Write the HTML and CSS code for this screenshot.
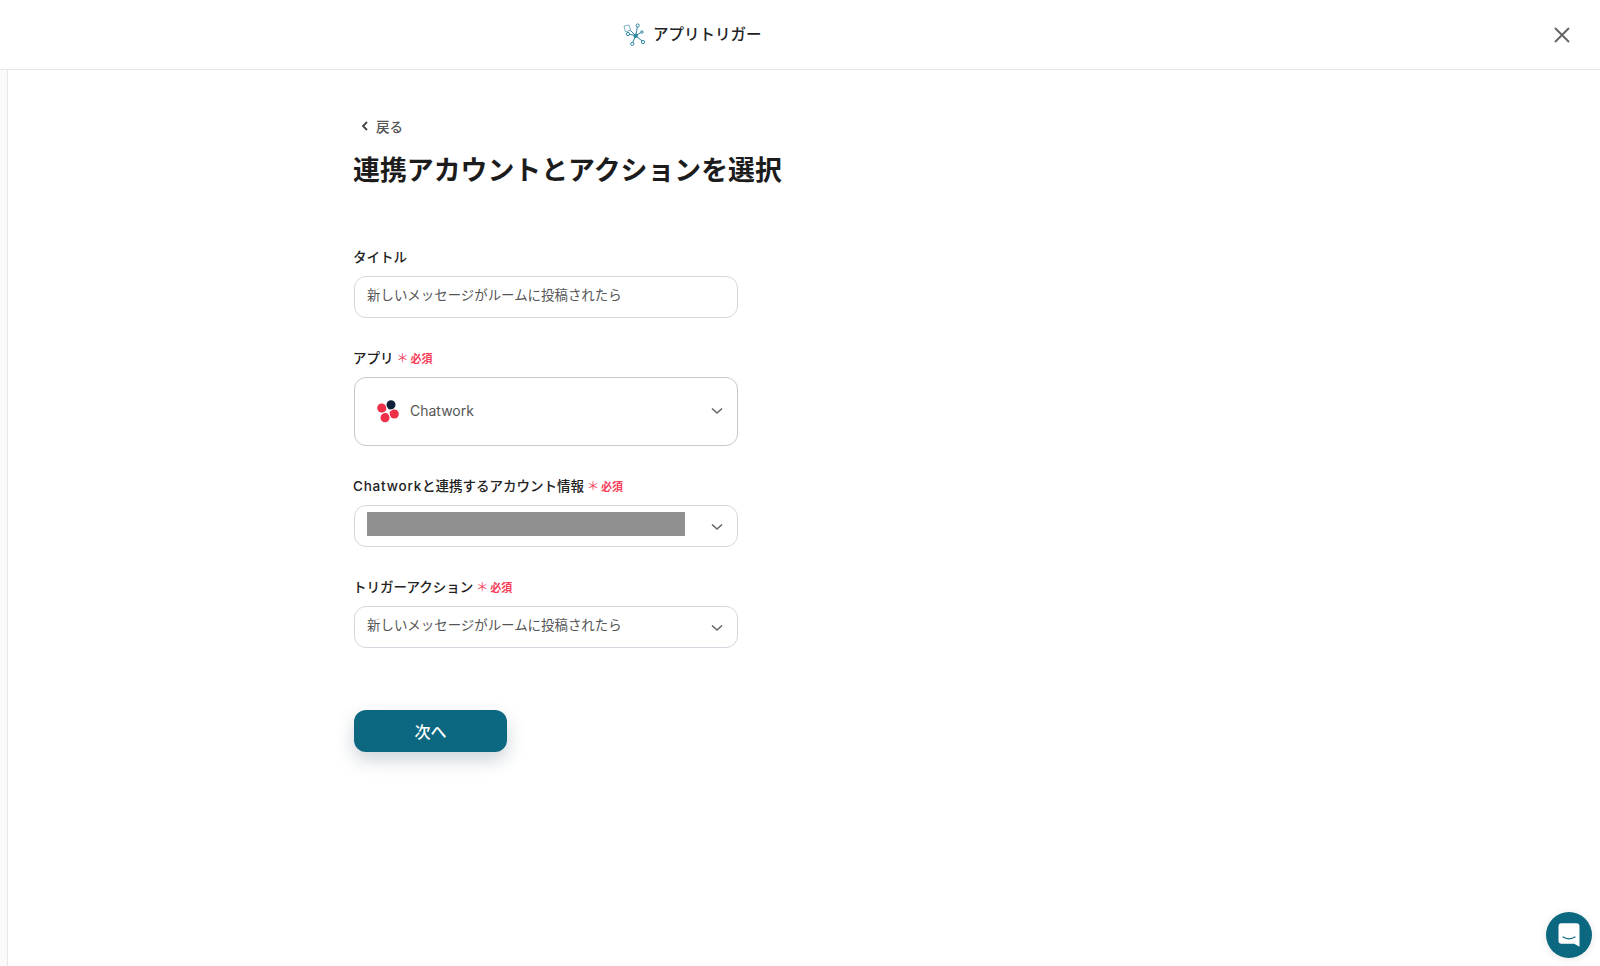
FILE: index.html
```html
<!DOCTYPE html>
<html lang="ja">
<head>
<meta charset="utf-8">
<title>アプリトリガー</title>
<link rel="stylesheet" href="styles.css">
</head>
<body>
<header class="topbar">
  <div class="topbar-title">
    <svg class="topbar-icon" viewBox="0 0 24 24" width="24" height="24" fill="none" stroke="#2f86a3" stroke-width="1">
      <path d="M13.700 12.700 L6 5 M13.700 12.700 L15.700 2 M13.700 12.700 L19.700 9 M13.700 12.700 L21 18.700 M13.700 12.700 L10.300 20.300 M13.700 12.700 L6 11"/>
      <path d="M2 3 L7 2 L8.500 7 L3.500 9 Z" stroke="#7fb2c6" fill="#fff"/>
      <circle cx="13.700" cy="12.700" r="2.200" fill="#2f86a3" stroke="none"/>
      <circle cx="15.700" cy="2.500" r="1.600" fill="#fff"/>
      <circle cx="19.900" cy="9" r="1.200" fill="#fff"/>
      <circle cx="21" cy="19" r="1.600" fill="#fff"/>
      <circle cx="10.300" cy="20.800" r="1.600" fill="#fff"/>
      <circle cx="6" cy="11" r="1.600" fill="#fff"/>
    </svg>
    <span class="topbar-text">アプリトリガー</span>
  </div>
  <button class="close" aria-label="閉じる">
    <svg viewBox="0 0 18 18" width="18" height="18" fill="none" stroke="#666" stroke-width="2"><path d="M2 2 L16 16 M16 2 L2 16"/></svg>
  </button>
</header>
<div class="layout">
  <aside class="rail"></aside>
  <main class="content">
    <a class="back">
      <svg viewBox="0 0 10 12" width="10" height="12" fill="none" stroke="#444" stroke-width="1.800"><path d="M7 2 L3 6 L7 10"/></svg>
      <span>戻る</span>
    </a>
    <h1 class="heading">連携アカウントとアクションを選択</h1>
    <form class="form">
      <div class="field">
        <label class="label">タイトル</label>
        <div class="control"><span class="value">新しいメッセージがルームに投稿されたら</span></div>
      </div>
      <div class="field">
        <label class="label">アプリ<span class="req"><span class="star">＊</span>必須</span></label>
        <div class="control control-app">
          <svg class="app-logo" viewBox="0 0 24 24" width="24" height="24">
            <circle cx="14" cy="4.700" r="4.500" fill="#0f2138"/>
            <path d="M11.800 9.400 L9.800 5 L15 9 Z" fill="#0f2138"/>
            <circle cx="4.700" cy="8" r="4.500" fill="#ef2f48"/>
            <path d="M9.400 10.200 L4.500 12.400 L8.800 5.800 Z" fill="#ef2f48"/>
            <circle cx="17.300" cy="14" r="4.500" fill="#ef2f48"/>
            <path d="M12.600 11.800 L17.500 9.600 L13.200 16.200 Z" fill="#ef2f48"/>
            <circle cx="8" cy="17.700" r="4.500" fill="#ef2f48"/>
            <path d="M10.100 13 L12.300 18 L5.600 13.900 Z" fill="#ef2f48"/>
          </svg>
          <span class="app-name value">Chatwork</span>
          <svg class="chev" viewBox="0 0 14 8" width="14" height="8" fill="none" stroke="#666" stroke-width="1.600"><path d="M2 1.500 L7 6 L12 1.500"/></svg>
        </div>
      </div>
      <div class="field">
        <label class="label"><span class="latin">Chatwork</span>と連携するアカウント情報<span class="req"><span class="star">＊</span>必須</span></label>
        <div class="control">
          <div class="redacted"></div>
          <svg class="chev" viewBox="0 0 14 8" width="14" height="8" fill="none" stroke="#666" stroke-width="1.600"><path d="M2 1.500 L7 6 L12 1.500"/></svg>
        </div>
      </div>
      <div class="field">
        <label class="label">トリガーアクション<span class="req"><span class="star">＊</span>必須</span></label>
        <div class="control">
          <span class="value">新しいメッセージがルームに投稿されたら</span>
          <svg class="chev" viewBox="0 0 14 8" width="14" height="8" fill="none" stroke="#666" stroke-width="1.600"><path d="M2 1.500 L7 6 L12 1.500"/></svg>
        </div>
      </div>
      <button type="button" class="next">次へ</button>
    </form>
  </main>
</div>
<button class="launcher" aria-label="チャット">
  <svg viewBox="0 0 24 24" width="28" height="28"><path d="M3 4.500 A2.500 2.500 0 0 1 5.500 2 H18.500 A2.500 2.500 0 0 1 21 4.500 V22 L16.500 19.500 H5.500 A2.500 2.500 0 0 1 3 17 Z" fill="#fff"/><path d="M6.500 13.500 Q12 17 17.500 13.500" fill="none" stroke="#0b6880" stroke-width="1.100"/></svg>
</button>
</body>
</html>
```
FILE: styles.css
```css
* { box-sizing: border-box; }
html, body { margin: 0; height: 100%; }
body {
  background: #fff;
  color: #222;
  font-family: Inter, "Noto Sans CJK JP", sans-serif;
  overflow: hidden;
}
.topbar {
  display: flex;
  align-items: center;
  height: 70px;
  padding: 0 29px 0 622px;
  border-bottom: 1px solid #e6e6e6;
}
.topbar-title {
  display: flex;
  align-items: center;
  gap: 7px;
  font-size: 15.500px;
  font-weight: 500;
}
.topbar-text { margin-top: -3px; }
.topbar-icon { display: block; }
.close {
  margin-left: auto;
  border: 0;
  padding: 0;
  background: none;
  display: flex;
}
.layout { display: flex; height: 896px; }
.rail {
  width: 8px;
  background: #fafafa;
  border-right: 1px solid #e8e8e8;
}
.content { padding: 46px 0 0 346px; flex: 1; }
.back {
  display: flex;
  align-items: center;
  gap: 6px;
  padding-left: 6px;
  height: 20px;
  font-size: 13.500px;
  font-weight: 500;
  color: #555;
}
.heading {
  margin: 14px 0 0 -1px;
  font-size: 26.900px;
  line-height: 40px;
  font-weight: 700;
  color: #1c1c1c;
}
.form { margin-top: 57px; width: 384px; }
.field { margin-bottom: 30px; }
.label {
  display: block;
  height: 20px;
  font-size: 13.500px;
  line-height: 20px;
  font-weight: 500;
  color: #222;
  margin-bottom: 9px;
  margin-left: -1px;
}
.latin { letter-spacing: 0.8px; }
.req {
  color: #f5405a;
  font-size: 11px;
  font-weight: 700;
  margin-left: 3px;
}
.star { font-weight: 400; margin-right: 2px; font-size: 12px; }
.control {
  display: flex;
  align-items: center;
  justify-content: space-between;
  height: 42px;
  padding: 0 12px;
  border: 1px solid #d3d7de;
  border-radius: 12px;
  font-size: 13.450px;
  color: #555;
}
.value { margin-top: -6px; }
.control-app {
  height: 69px;
  padding: 0 12px 0 22px;
  justify-content: flex-start;
  border-color: #c8c8cc;
}
.app-name { margin-left: 9px; font-size: 14px; margin-top: -3px; }
.app-logo { display: block; }
.control-app .chev { margin-left: auto; margin-top: -2px; }
.redacted { width: 318px; height: 24px; background: #909090; margin-top: -4px; }
.chev { display: block; margin-right: 1px; margin-top: 2px; }
.next {
  display: block;
  margin-top: 62px;
  width: 153px;
  height: 42px;
  border: 0;
  border-radius: 12px;
  background: #0b6880;
  color: #fff;
  font: 500 16px Inter, "Noto Sans CJK JP", sans-serif;
  box-shadow: 0 8px 18px rgba(30, 60, 80, 0.22);
}
.launcher {
  position: fixed;
  right: 8px;
  bottom: 8px;
  width: 46px;
  height: 46px;
  border: 0;
  padding: 0;
  border-radius: 50%;
  background: #0b6880;
  display: flex;
  align-items: center;
  justify-content: center;
  box-shadow: 0 1px 8px rgba(0, 0, 0, 0.1);
}
```
